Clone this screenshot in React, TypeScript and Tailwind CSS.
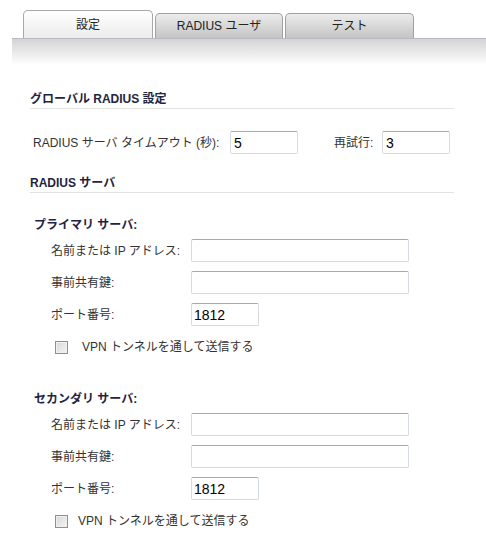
import React from 'react';

const FONT = "font-['Liberation_Sans','Noto_Sans_CJK_JP',sans-serif]";

const Field = ({ label, value, wide }: { label: string; value?: string; wide?: boolean }) => (
  <div className="flex items-center">
    <label className="w-[140px] text-[12px] text-[#333]">{label}</label>
    <input
      readOnly
      value={value ?? ''}
      className={`${wide ? 'w-[218px]' : 'w-[68px]'} h-[23px] rounded-[2px] border border-[#d6dae2] border-t-[#a9a9a9] bg-white px-[2px] text-[14px] text-black font-['Liberation_Sans',sans-serif] outline-none`}
    />
  </div>
);

const Checkbox = ({ label, gap }: { label: string; gap: string }) => (
  <div className={`flex items-center ${gap}`}>
    <span className="w-[13px] h-[13px] border border-[#8f8f8f] bg-gradient-to-br from-[#d8d8d8] to-[#f4f4f4] shadow-[inset_0_0_0_1px_#f0f0f0]" />
    <span className="text-[12px] text-[#333]">{label}</span>
  </div>
);

const Server = ({ title, cbGap }: { title: string; cbGap: string }) => (
  <div>
    <div className="pl-[4px] text-[12px] font-bold text-[#1f2442] leading-[16px]">{title}</div>
    <div className="pl-[21px] mt-[6px] flex flex-col gap-[9px]">
      <Field label="名前または IP アドレス:" wide />
      <Field label="事前共有鍵:" wide />
      <Field label="ポート番号:" value="1812" />
    </div>
    <div className="pl-[25px] mt-[12px]">
      <Checkbox label="VPN トンネルを通して送信する" gap={cbGap} />
    </div>
  </div>
);

export default function App() {
  return (
    <div className={`w-[486px] h-[553px] bg-white overflow-hidden ${FONT}`}>
      {/* tabs */}
      <div className="h-[38px] pl-[23px] flex items-end gap-[2px]">
        <div className="w-[130px] h-[28px] rounded-t-[5px] border border-b-0 border-[#a8a8a8] bg-gradient-to-b from-white to-[#ececec] flex items-center justify-center text-[12px] text-[#222]">
          設定
        </div>
        <div className="w-[128px] h-[25px] rounded-t-[5px] border border-b-0 border-[#a0a0a0] bg-gradient-to-b from-[#ececec] to-[#c4c4c4] flex items-center justify-center text-[12px] text-[#222]">
          RADIUS ユーザ
        </div>
        <div className="w-[129px] h-[25px] rounded-t-[5px] border border-b-0 border-[#a0a0a0] bg-gradient-to-b from-[#ececec] to-[#c4c4c4] flex items-center justify-center text-[12px] text-[#222]">
          テスト
        </div>
      </div>
      <div className="ml-[12px] h-[27px] border-t border-[#b8b8c6] bg-gradient-to-b from-[#d4d4d4] to-white" />

      {/* content */}
      <div className="pl-[30px] pr-[32px] pt-[26px]">
        <div className="border-b border-[#e2e2e2] pb-[1px] text-[12px] font-bold text-[#1f2442] leading-[16px]">
          グローバル RADIUS 設定
        </div>
        <div className="mt-[22px] pl-[3px] flex items-center">
          <label className="w-[197px] text-[12px] text-[#333]">RADIUS サーバ タイムアウト (秒):</label>
          <input
            readOnly
            value="5"
            className="w-[68px] h-[23px] rounded-[2px] border border-[#d6dae2] border-t-[#a9a9a9] px-[3px] text-[14px] text-black font-['Liberation_Sans',sans-serif] outline-none"
          />
          <label className="ml-[36px] w-[48px] text-[12px] text-[#333]">再試行:</label>
          <input
            readOnly
            value="3"
            className="w-[68px] h-[23px] rounded-[2px] border border-[#d6dae2] border-t-[#a9a9a9] px-[3px] text-[14px] text-black font-['Liberation_Sans',sans-serif] outline-none"
          />
        </div>
        <div className="mt-[21px] border-b border-[#e2e2e2] pb-[1px] text-[12px] font-bold text-[#1f2442] leading-[16px]">
          RADIUS サーバ
        </div>
        <div className="mt-[24px]">
          <Server title="プライマリ サーバ:" cbGap="gap-[14px]" />
        </div>
        <div className="mt-[35px]">
          <Server title="セカンダリ サーバ:" cbGap="gap-[10px]" />
        </div>
      </div>
    </div>
  );
}
